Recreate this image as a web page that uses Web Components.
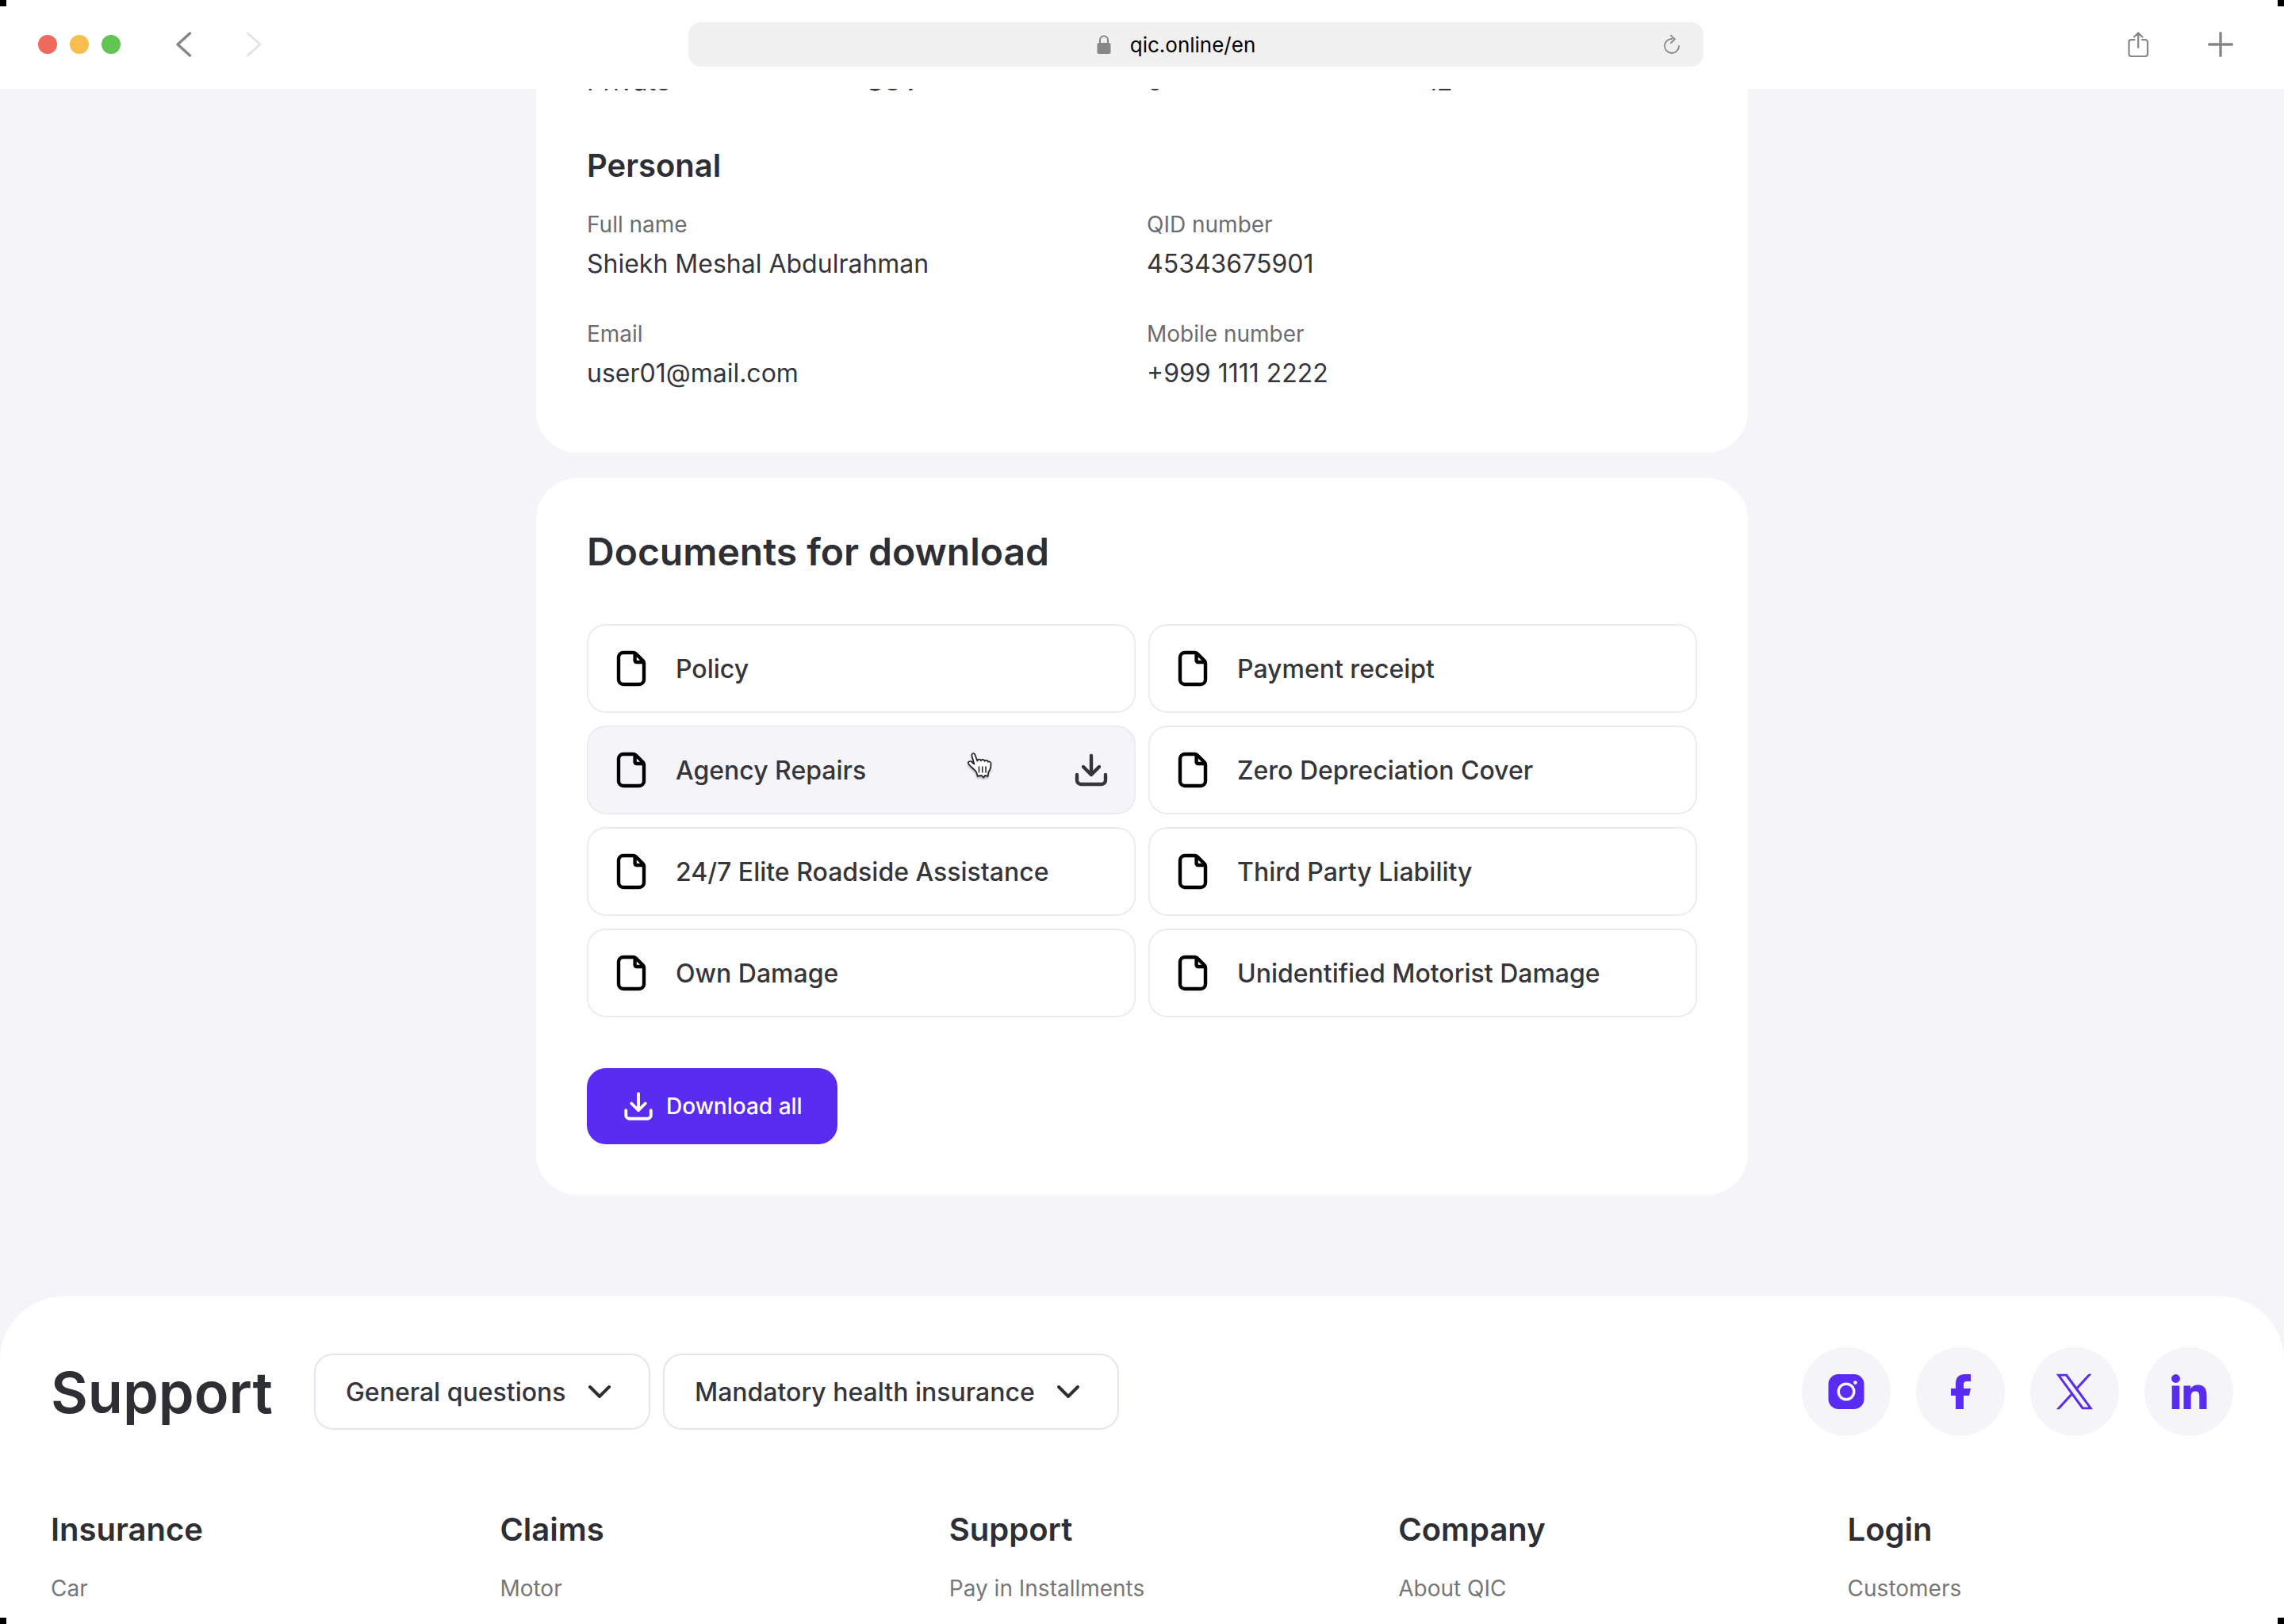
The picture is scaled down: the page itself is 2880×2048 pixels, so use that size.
<!DOCTYPE html>
<html lang="en">
<head>
<meta charset="utf-8">
<title>QIC</title>
<style>
  html, body { margin: 0; height: 100%; }
  body {
    font-family: Inter, "Liberation Sans", sans-serif;
    color: var(--ink);
    --ink: #2e2e35;
    --text: #35353b;
    --muted: #6d6d70;
    --brand: #5a2bf0;
    --surface: #f4f4f9;
    --line: #ebebf1;
  }
</style>
</head>
<body>
<app-window>
  <browser-bar slot="bar" url="qic.online/en"></browser-bar>

  <info-card flush>
    <field-grid columns="4">
      <field-item>Private</field-item>
      <field-item>SUV</field-item>
      <field-item>6</field-item>
      <field-item>12</field-item>
    </field-grid>
    <section-title>Personal</section-title>
    <field-grid columns="2">
      <field-item label="Full name">Shiekh Meshal Abdulrahman</field-item>
      <field-item label="QID number">45343675901</field-item>
      <field-item label="Email">user01@mail.com</field-item>
      <field-item label="Mobile number">+999 1111 2222</field-item>
    </field-grid>
  </info-card>

  <info-card>
    <document-list heading="Documents for download">
      <document-tile>Policy</document-tile>
      <document-tile>Payment receipt</document-tile>
      <document-tile active>Agency Repairs</document-tile>
      <document-tile>Zero Depreciation Cover</document-tile>
      <document-tile>24/7 Elite Roadside Assistance</document-tile>
      <document-tile>Third Party Liability</document-tile>
      <document-tile>Own Damage</document-tile>
      <document-tile>Unidentified Motorist Damage</document-tile>
      <download-button slot="action">Download all</download-button>
    </document-list>
  </info-card>

  <site-footer slot="footer" heading="Support">
    <topic-select slot="topics" topic="General questions"></topic-select>
    <topic-select slot="topics" topic="Mandatory health insurance"></topic-select>
    <social-link slot="social" network="instagram"></social-link>
    <social-link slot="social" network="facebook"></social-link>
    <social-link slot="social" network="x"></social-link>
    <social-link slot="social" network="linkedin"></social-link>
    <link-column heading="Insurance">Car</link-column>
    <link-column heading="Claims">Motor</link-column>
    <link-column heading="Support">Pay in Installments</link-column>
    <link-column heading="Company">About QIC</link-column>
    <link-column heading="Login">Customers</link-column>
  </site-footer>
</app-window>

<script>
const ICONS = {
  back: ['0 0 32 32', '<path d="M23.500 2 8 16l15.500 14" stroke-width="3.400"/>'],
  forward: ['0 0 32 32', '<path d="M8.500 2 24 16 8.500 30" stroke-width="3"/>'],
  share: ['0 0 32 32', '<path d="M11.500 10.200H7.500a3 3 0 0 0-3 3V28a3 3 0 0 0 3 3h17.500a3 3 0 0 0 3-3V13.200a3 3 0 0 0-3-3h-4M16.200 20V1.500M11 6.500l5.200-5 5.200 5" stroke-width="2.200"/>'],
  plus: ['0 0 32 32', '<path d="M16 1.700v28.600M1.700 16h28.600" stroke-width="3.400"/>'],
  reload: ['0 0 24 24', '<path d="M12.500 5A9 9 0 1 0 21 14M11 .8l5 4.600-5 4.600" stroke-width="1.800"/>'],
  lock: ['0 0 18 24', '<path d="M4 11V6.500a5 5 0 0 1 10 0V11" stroke-width="2"/><rect x="0.500" y="10" width="17" height="14" rx="2.500" fill="currentColor" stroke="none"/>'],
  file: ['0 0 24 24', '<path d="M13 2H7a3 3 0 0 0-3 3v14a3 3 0 0 0 3 3h10a3 3 0 0 0 3-3V8.500a2 2 0 0 0-.6-1.400l-4.500-4.400A2.400 2.400 0 0 0 13 2ZM14.300 2.500V7a1 1 0 0 0 1 1h4.500" stroke-width="2.200"/>'],
  download: ['0 0 24 24', '<path d="M12 3v12M7 10l5 5 5-5M3 15v3.500A2.500 2.500 0 0 0 5.500 21h13a2.500 2.500 0 0 0 2.500-2.500V15" stroke-width="2.200"/>'],
  chevron: ['0 0 24 24', '<path d="m6 9 6 6 6-6" stroke-width="2"/>'],
  hand: ['0 0 34 36', '<path d="M12.500 24.500C9 21 4.500 17.500 3 14.800c-.8-2 1.600-3.600 3.800-2.300l3.600 3L7.500 5.200C6.800 2.200 10.200 1 11.300 3.600l3.100 8.100c0-2.800 4-2.900 4.600-.2.600-2.400 4.200-2 4.500.4 1-1.900 4.100-1.200 4.400 1 1.600-1.200 3.600-.2 3.600 2 0 5-1.400 8.400-3.200 11l-.6 5-3.500-1-2 2.500-3-2.500-4.700 1c.2-2-1-4-2-6.400Z" fill="#fff" stroke="#222" stroke-width="1.700"/><path d="M16.500 19v7M20.800 19v7M25 19v7" stroke="#222" stroke-width="1.500"/>'],
  instagram: ['0 0 48 48', '<rect x="1.500" y="2" width="45" height="44" rx="12.500" fill="currentColor" stroke="none"/><circle cx="24" cy="24" r="9.800" stroke="#f4f4f9" stroke-width="3.400"/><circle cx="35.400" cy="12.600" r="2.400" fill="#f4f4f9" stroke="none"/>'],
  facebook: ['0 0 48 48', '<path d="M18 46V29h-6v-9h6v-6C18 6 22 2 30 2h7v9h-5c-3 0-4 1.500-4 4v5h9l-2 9h-7v17Z" fill="currentColor" stroke="none"/>'],
  x: ['0 0 48 48', '<path transform="translate(.8 1.700) scale(.0385 .0364)" d="M714.163 519.284 1160.890 0H1055.030L667.137 450.887 357.328 0H0l468.492 681.821L0 1226.370h105.866l409.625-476.152 327.181 476.152H1200L714.137 519.284ZM569.165 687.828l-47.468-67.894L144.011 79.694h162.604l304.797 435.991 47.468 67.894 396.200 566.721H892.476L569.165 687.854Z" fill="currentColor" stroke="none"/>'],
  linkedin: ['0 0 48 48', '<circle cx="7.500" cy="7.500" r="5.400" fill="currentColor" stroke="none"/><path d="M2.700 16.500h9.600V46H2.700ZM17.500 16.500h8.700v4C28 17.500 31 15.600 35.500 15.600c8.500 0 11 5.400 11 13.400v17h-9.200V30.500c0-4-.6-7-5-7-4.500 0-5.600 3-5.600 7V46h-9.200Z" fill="currentColor" stroke="none"/>']
};

/* Registers an element whose shadow root is filled from css + a render function. */
function define(name, css, render) {
  customElements.define(name, class extends HTMLElement {
    constructor() {
      super();
      this.attachShadow({ mode: 'open' });
    }
    connectedCallback() {
      this.shadowRoot.innerHTML = `<style>*{box-sizing:border-box}${css}</style>${render(this)}`;
    }
  });
}

define('ui-icon',
  `:host{display:block;flex:none;width:48px;height:48px}
   svg{display:block;width:100%;height:100%;overflow:visible}`,
  el => {
    const [box, body] = ICONS[el.getAttribute('name')];
    return `<svg viewBox="${box}" fill="none" stroke="currentColor" stroke-linecap="round" stroke-linejoin="round" aria-hidden="true">${body}</svg>`;
  });

define('app-window',
  `:host{display:flex;flex-direction:column;height:100vh;overflow:hidden;background:var(--surface)}
   .view{flex:1;min-height:0;display:flex;flex-direction:column;overflow:hidden}
   main{flex:none;width:min(1528px,100% - 64px);margin:-33px auto 128px;display:flex;flex-direction:column;gap:32px}
   ::slotted(site-footer){flex:1 0 auto}
   .corners{position:fixed;inset:0;pointer-events:none;
     --dot:linear-gradient(#000,#000);
     background:var(--dot) 0 0,var(--dot) 100% 0,var(--dot) 0 100%,var(--dot) 100% 100%;
     background-size:8px 8px;background-repeat:no-repeat}`,
  () => `<slot name="bar"></slot><div class="view"><main><slot></slot></main><slot name="footer"></slot></div><div class="corners"></div>`);

define('browser-bar',
  `:host{display:flex;align-items:center;flex:none;height:112px;padding:0 64px 0 48px;background:#fff;color:#868686}
   .lights{display:flex;gap:16px;margin-right:64px}
   .lights i{width:24px;height:24px;border-radius:50%}
   button{display:block;border:0;padding:0;background:none;color:inherit}
   button ui-icon{width:32px;height:32px}
   .nav{display:flex;gap:56px}
   .tools{display:flex;gap:72px}
   .nav button:disabled{color:#e4e4e4}
   .address{display:grid;grid-template-columns:1fr auto 1fr;align-items:center;column-gap:24px;flex:0 1 1280px;height:56px;margin:0 auto;padding:0 28px 0 20px;border-radius:16px;background:#f0f0f0}
   .address>ui-icon{width:18px;height:24px;justify-self:end}
   .address button{justify-self:end}
   .address button ui-icon{width:24px;height:24px}
   input{field-sizing:content;border:0;padding:2px 0 0;outline:0;background:none;font:400 26px/32px Inter,"Liberation Sans",sans-serif;color:#000;text-align:center}`,
  el => `<div class="lights"><i style="background:#ec6a5e"></i><i style="background:#f5bf4f"></i><i style="background:#61c554"></i></div>
   <div class="nav"><button aria-label="Back"><ui-icon name="back"></ui-icon></button><button aria-label="Forward" disabled><ui-icon name="forward"></ui-icon></button></div>
   <div class="address"><ui-icon name="lock"></ui-icon><input type="text" aria-label="Address" value="${el.getAttribute('url')}"><button aria-label="Reload"><ui-icon name="reload"></ui-icon></button></div>
   <div class="tools"><button aria-label="Share"><ui-icon name="share"></ui-icon></button><button aria-label="New tab"><ui-icon name="plus"></ui-icon></button></div>`);

define('info-card',
  `:host{display:block;padding:64px;border-radius:52px;background:#fff}
   :host([flush]){padding:0 64px 76px;border-top-left-radius:0;border-top-right-radius:0}`,
  () => `<slot></slot>`);

define('section-title',
  `:host{display:block}
   h3{margin:60px 0 32px;font-size:40px;line-height:44px;font-weight:600}`,
  () => `<h3><slot></slot></h3>`);

define('field-grid',
  `:host{display:grid;gap:44px 12px;grid-template-columns:repeat(2,1fr)}
   :host([columns="4"]){grid-template-columns:repeat(4,1fr)}`,
  () => `<slot></slot>`);

define('field-item',
  `:host{display:flex;flex-direction:column;gap:6px}
   .label{font-size:28px;line-height:40px;color:var(--muted)}
   .value{font-size:32px;line-height:48px;color:var(--text)}`,
  el => `${el.hasAttribute('label') ? `<span class="label">${el.getAttribute('label')}</span>` : ''}<span class="value"><slot></slot></span>`);

define('document-list',
  `:host{display:block}
   h2{margin:0 0 62px;font-size:48px;line-height:58px;font-weight:600}
   .grid{display:grid;grid-template-columns:1fr 1fr;gap:16px;margin-bottom:64px}`,
  el => `<h2>${el.getAttribute('heading')}</h2><div class="grid"><slot></slot></div><slot name="action"></slot>`);

define('document-tile',
  `:host{display:block;position:relative}
   a{display:flex;align-items:center;gap:32px;height:112px;padding:0 30px;border:2px solid var(--line);border-radius:24px;font-size:32px;line-height:48px;font-weight:500;color:var(--text);text-decoration:none}
   span{padding-top:2px}
   .file{color:#000}
   .save{margin-left:auto}
   :host([active]) a{background:var(--surface)}
   .pointer{position:absolute;left:478px;top:33px;width:34px;height:36px;filter:drop-shadow(0 2px 1px rgba(0,0,0,.3))}`,
  el => `<a href="#"><ui-icon class="file" name="file"></ui-icon><span><slot></slot></span>${el.hasAttribute('active') ? '<ui-icon class="save" name="download"></ui-icon>' : ''}</a>${el.hasAttribute('active') ? '<ui-icon class="pointer" name="hand"></ui-icon>' : ''}`);

define('download-button',
  `:host{display:flex}
   button{display:flex;align-items:center;gap:14px;height:96px;padding:0 44px;border:0;border-radius:24px;background:var(--brand);color:#fff;font:500 28px/40px Inter,"Liberation Sans",sans-serif}
   ui-icon{width:42px;height:42px}`,
  () => `<button><ui-icon name="download"></ui-icon><span><slot></slot></span></button>`);

define('site-footer',
  `:host{display:block;padding:64px 64px 0;border-radius:80px 80px 0 0;background:#fff}
   .top{display:flex;align-items:center;min-height:112px;margin-bottom:96px}
   h2{margin:0 52px 0 0;padding-top:2px;font-size:72px;line-height:80px;font-weight:600}
   .topics{display:flex;gap:16px}
   .social{display:flex;gap:32px;margin-left:auto}
   .columns{display:grid;grid-template-columns:repeat(5,1fr);column-gap:80px}`,
  el => `<footer><div class="top"><h2>${el.getAttribute('heading')}</h2><div class="topics"><slot name="topics"></slot></div><div class="social"><slot name="social"></slot></div></div><nav class="columns"><slot></slot></nav></footer>`);

define('topic-select',
  `:host{display:grid;align-items:center}
   select,ui-icon{grid-area:1/1}
   select{appearance:none;height:96px;padding:2px 104px 0 38px;border:2px solid #e6e4f0;border-radius:24px;background:#fff;font:500 32px/48px Inter,"Liberation Sans",sans-serif;color:var(--text)}
   ui-icon{justify-self:end;margin-right:40px;pointer-events:none}`,
  el => `<select aria-label="${el.getAttribute('topic')}"><option>${el.getAttribute('topic')}</option></select><ui-icon name="chevron"></ui-icon>`);

define('social-link',
  `:host{display:block}
   a{display:grid;place-items:center;width:112px;height:112px;border-radius:50%;background:var(--surface);color:var(--brand)}`,
  el => `<a href="#" aria-label="${el.getAttribute('network')}"><ui-icon name="${el.getAttribute('network')}"></ui-icon></a>`);

define('link-column',
  `:host{display:block}
   h3{margin:0 0 32px;font-size:40px;line-height:44px;font-weight:600}
   a{display:block;font-size:28px;line-height:40px;color:#777779;text-decoration:none}`,
  el => `<h3>${el.getAttribute('heading')}</h3><a href="#"><slot></slot></a>`);
</script>
</body>
</html>
